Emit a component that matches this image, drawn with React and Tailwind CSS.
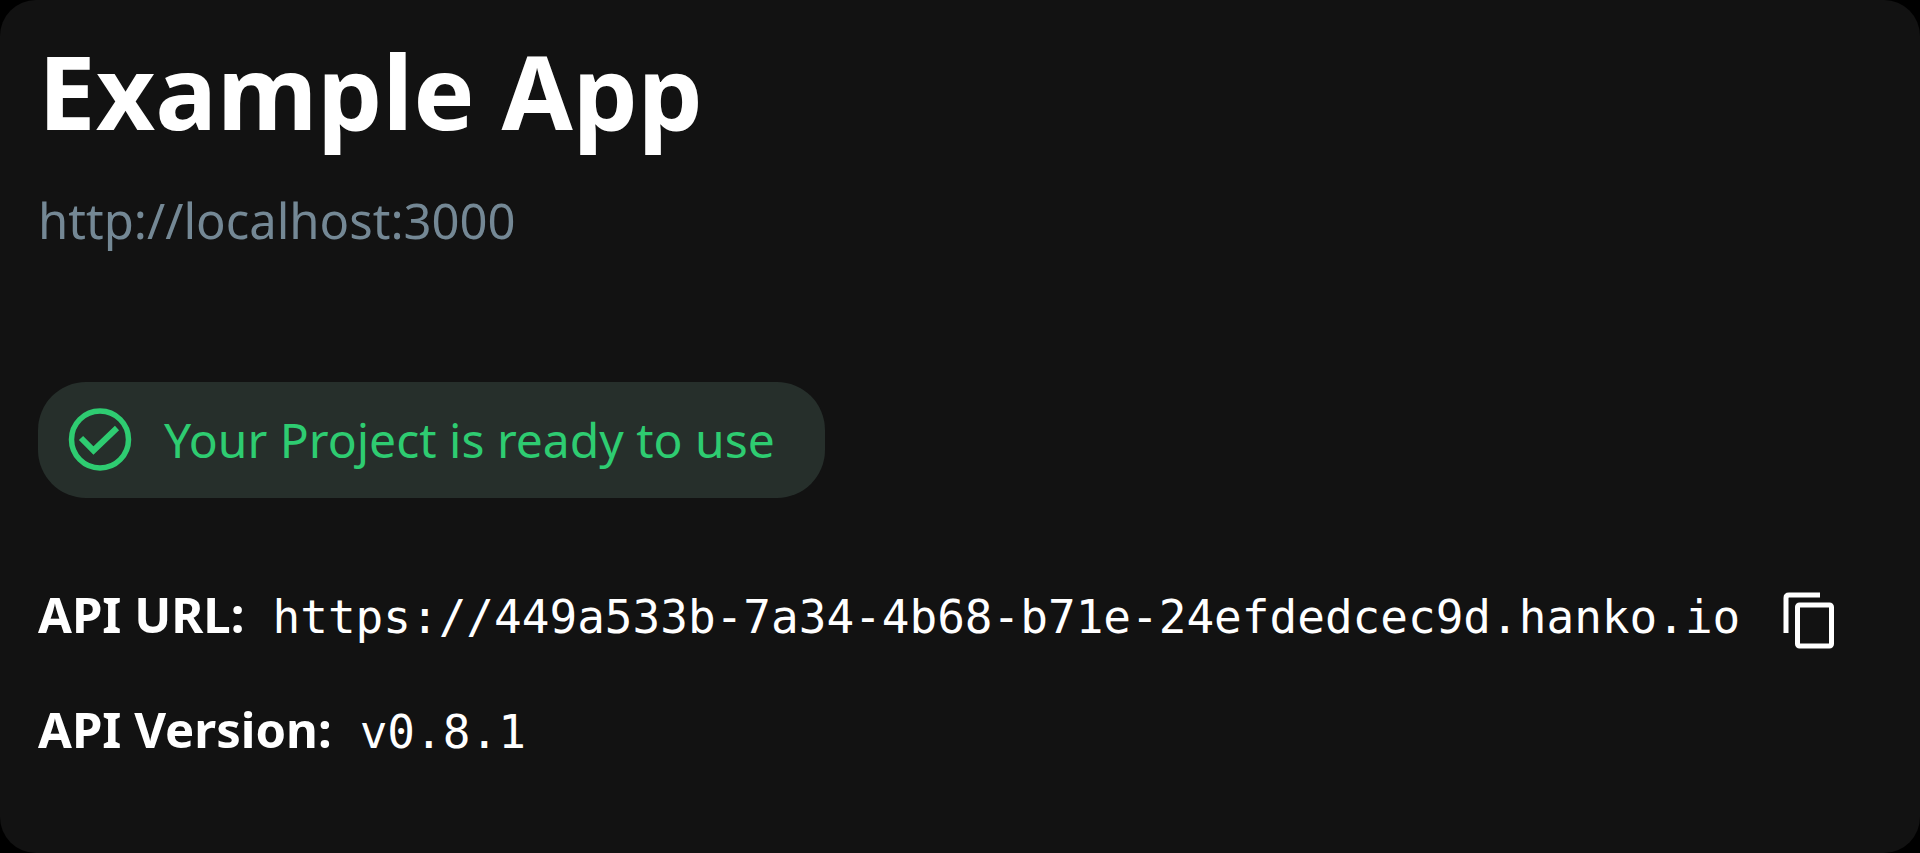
const project = {
  name: 'Example App',
  origin: 'http://localhost:3000',
  apiUrl: 'https://449a533b-7a34-4b68-b71e-24efdedcec9d.hanko.io',
  apiVersion: 'v0.8.1',
}

const CheckIcon = () => (
  <svg className="w-16 h-16 shrink-0" viewBox="0 0 64 64" fill="none" stroke="currentColor" aria-hidden="true">
    <circle cx="32" cy="31.5" r="28.5" strokeWidth="5.5" />
    <path d="M13 30 L25.5 42.5 L49 20" strokeWidth="6" />
  </svg>
)

const CopyIcon = () => (
  <svg className="w-14 h-16" viewBox="0 0 56 64" fill="none" stroke="currentColor" strokeWidth="5" aria-hidden="true">
    <path d="M6 48V13Q6 10 9 10H40" />
    <rect x="17.5" y="20" width="34" height="41" rx="2" />
  </svg>
)

const InfoRow = ({ label, value, children }) => (
  <div className="flex items-baseline py-6">
    <dt className="font-bold mr-7">{label}</dt>
    <dd className="flex items-center gap-10 font-['DejaVu_Sans_Mono',monospace] text-[46px]">
      {value}
      {children}
    </dd>
  </div>
)

const App = () => {
  const copyUrl = () => navigator.clipboard?.writeText(project.apiUrl)

  return (
    <div className="min-h-screen bg-black">
      <main className="min-h-screen rounded-[36px] bg-[#121212] px-[38px] pt-5 text-white whitespace-nowrap font-['Noto_Sans',sans-serif] text-[49px] leading-[64px]">
        <h1 className="font-bold text-[103px] leading-[140px]">{project.name}</h1>
        <a href={project.origin} className="block mt-7 text-[#748895]">{project.origin}</a>

        <div className="mt-[130px] flex w-fit items-center gap-8 h-[116px] pl-[30px] pr-[50px] rounded-[48px] bg-[#262f2b] text-[#2ecc71] text-[48px]">
          <CheckIcon />
          <span>Your Project is ready to use</span>
        </div>

        <dl className="mt-[60px]">
          <InfoRow label="API URL:" value={project.apiUrl}>
            <button type="button" onClick={copyUrl} aria-label="Copy API URL">
              <CopyIcon />
            </button>
          </InfoRow>
          <InfoRow label="API Version:" value={project.apiVersion} />
        </dl>
      </main>
    </div>
  )
}

export default App
